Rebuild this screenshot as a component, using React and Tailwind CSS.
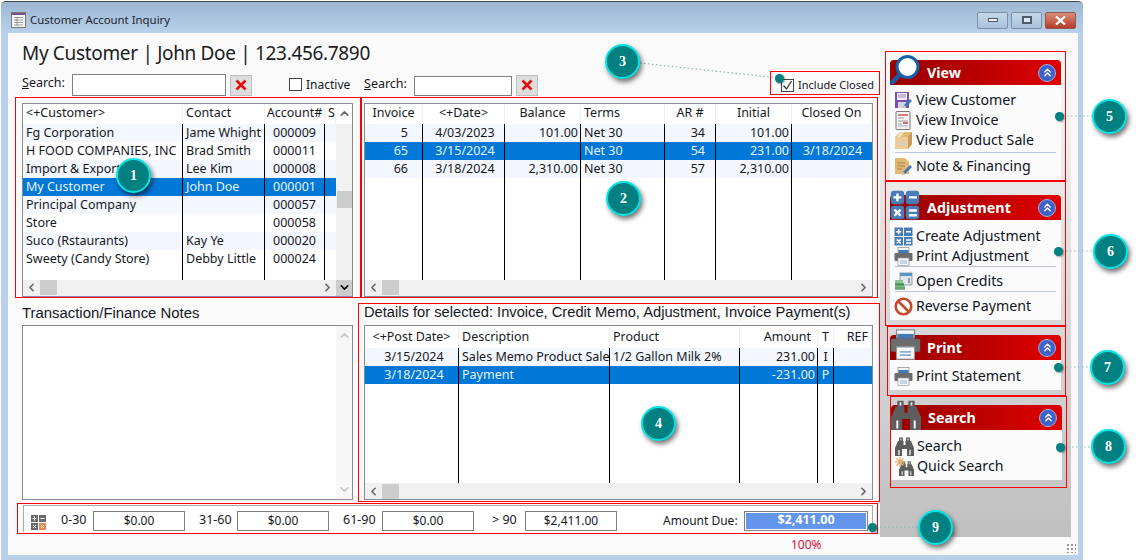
import React from "react";
import { ChevronLeft, ChevronRight, ChevronUp, ChevronDown, ChevronsUp } from "lucide-react";

const Floppy = () => (
  <svg width="19" height="19" viewBox="0 0 19 19" className="shrink-0">
    <rect x="1" y="1" width="14" height="16" fill="#7a4fa8" />
    <rect x="3" y="2" width="10" height="7" fill="#f3f0f8" />
    <path d="M4 4h8M4 6h8" stroke="#9a86b8" />
    <rect x="4" y="11" width="8" height="6" fill="#d8d0e4" />
    <path d="M9 17l1-3 6-6 2 2-6 6z" fill="#3b78b8" />
    <path d="M9 17l1-3 2 2z" fill="#f0d8a8" />
  </svg>
);
const InvoiceDoc = () => (
  <svg width="19" height="19" viewBox="0 0 19 19" className="shrink-0">
    <rect x="2" y="0.5" width="14" height="18" rx="1" fill="#f4f4f4" stroke="#777" />
    <path d="M4 4h10" stroke="#c55" strokeWidth="1.5" />
    <path d="M4 7h6M4 10h10" stroke="#999" />
    <rect x="9" y="11" width="5" height="2" fill="#d86a6a" />
    <path d="M4 13h4M4 15h10" stroke="#aaa" />
  </svg>
);
const BoxIcon = () => (
  <svg width="19" height="19" viewBox="0 0 19 19" className="shrink-0">
    <path d="M1 6l5-5h12v12l-4 5H1z" fill="#e0b878" />
    <path d="M1 6h13v12H1z" fill="#eccb94" />
    <path d="M14 6l4-5v12l-4 5z" fill="#c89a58" />
    <path d="M6 1h4L7 6H3z" fill="#f3e0b8" />
    <rect x="5" y="11" width="6" height="3" fill="#fff" />
    <path d="M6 11v3M8 11v3M10 11v3" stroke="#777" strokeWidth="0.7" />
  </svg>
);
const NoteIcon = () => (
  <svg width="19" height="19" viewBox="0 0 19 19" className="shrink-0">
    <path d="M1 1h10l4 4v12H1z" fill="#e3b874" />
    <path d="M3 6h8M3 9h8M3 12h5" stroke="#a88450" />
    <path d="M8 18l1-3 7-7 2 2-7 7z" fill="#3b78b8" />
    <path d="M8 18l1-3 2 2z" fill="#f0d8a8" />
  </svg>
);
const CalcGrid = ({ s = 19, r = 0 }) => (
  <svg width={s} height={s} viewBox="0 0 19 19" className="shrink-0">
    <g fill="#4a7db8">
      <rect x="0.5" y="0.5" width="8.5" height="8.5" rx={r} />
      <rect x="10" y="0.5" width="8.5" height="8.5" rx={r} />
      <rect x="0.5" y="10" width="8.5" height="8.5" rx={r} />
      <rect x="10" y="10" width="8.5" height="8.5" rx={r} />
    </g>
    <path d="M4.7 2.2v5M2.2 4.7h5M12 4.7h5M2.8 12.4l3.9 3.9M6.7 12.4l-3.9 3.9M12 13h5M12 16h5" stroke="#fff" strokeWidth="1.5" />
  </svg>
);
const PrinterIcon = ({ s = 19 }) => (
  <svg width={s} height={s} viewBox="0 0 19 19" className="shrink-0">
    <rect x="4" y="0.5" width="11" height="5" fill="#f2f4f8" stroke="#888" strokeWidth="0.7" />
    <rect x="4.5" y="3" width="10" height="3" fill="#4479b4" />
    <rect x="0.5" y="6" width="18" height="8" rx="1" fill="#6c6c6c" />
    <rect x="4" y="11" width="11" height="7.5" fill="#f6f8fb" stroke="#999" strokeWidth="0.7" />
    <path d="M6 14h7M6 16h7" stroke="#8fb0d4" />
  </svg>
);
const Credits = () => (
  <svg width="19" height="19" viewBox="0 0 19 19" className="shrink-0">
    <rect x="6" y="1" width="12" height="12" fill="#dfe7ee" stroke="#6a7a88" strokeWidth="0.7" />
    <rect x="6" y="1" width="12" height="3" fill="#5a94c4" />
    <path d="M15 6v5" stroke="#555" />
    <rect x="1" y="8" width="8" height="3" fill="#8cc49a" />
    <rect x="1" y="11" width="9" height="3" fill="#5fa774" />
    <rect x="1" y="14" width="10" height="4" fill="#7dbb8c" />
    <path d="M1 12.5h9M1 16h10" stroke="#3d7a52" strokeWidth="0.6" />
  </svg>
);
const BanIcon = () => (
  <svg width="19" height="19" viewBox="0 0 19 19" className="shrink-0">
    <circle cx="9.5" cy="9.5" r="7.8" fill="#fff" stroke="#c64a2e" strokeWidth="2.6" />
    <path d="M4 4l11 11" stroke="#c64a2e" strokeWidth="2.6" />
  </svg>
);
const Binoculars = ({ s = 19, w = 19 }) => (
  <svg width={w} height={s} viewBox="0 0 19 19" className="shrink-0">
    <g fill="#5d5d5d">
      <rect x="4" y="0.5" width="4" height="4" />
      <rect x="11" y="0.5" width="4" height="4" />
      <path d="M3 4h5.5v4h2V4H16l3 7v8h-7v-7H7v7H0v-8z" />
    </g>
    <path d="M4 13v5M15 13v5" stroke="#fff" strokeWidth="1.2" />
    <path d="M6 1.5v2M13 1.5v2" stroke="#fff" strokeWidth="1" />
  </svg>
);
const QuickBin = () => (
  <div className="relative w-[19px] h-[19px] shrink-0 flex items-end justify-end">
    <Binoculars s={15} w={15} />
    <svg width="10" height="10" viewBox="0 0 10 10" className="absolute left-0 top-0">
      <path d="M5 0v10M0 5h10M1.5 1.5l7 7M8.5 1.5l-7 7" stroke="#e8a860" strokeWidth="1.2" />
    </svg>
  </div>
);
const Magnifier = () => (
  <svg width="30" height="30" viewBox="0 0 30 30">
    <path d="M10.5 19L2 27.5" stroke="#1c5aa8" strokeWidth="4.5" strokeLinecap="round" />
    <circle cx="17.5" cy="12" r="10.5" fill="#fff" stroke="#1460ac" strokeWidth="3" />
  </svg>
);
const RedX = () => (
  <svg width="12" height="12" viewBox="0 0 12 12">
    <path d="M1.5 1.5l9 9M10.5 1.5l-9 9" stroke="#e01010" strokeWidth="2.6" />
  </svg>
);
const SumIcon = () => (
  <svg width="15" height="15" viewBox="0 0 15 15" className="shrink-0">
    <rect x="0" y="0" width="7" height="7" fill="#6a6a6a" />
    <rect x="8" y="0" width="7" height="7" fill="#6a6a6a" />
    <rect x="0" y="8" width="7" height="7" fill="#6a6a6a" />
    <rect x="8" y="8" width="7" height="7" fill="#e88a58" />
    <path d="M3.5 1.5v4M1.5 3.5h4M9.5 3.5h4M2 10l3 3M5 10l-3 3M10 10l3 3M13 10l-3 3" stroke="#fff" />
  </svg>
);

const alignClass = { l: "justify-start", c: "justify-center", r: "justify-end" };

function Column({ col, selected, last }) {
  return (
    <div className={`flex flex-col shrink-0 ${col.w}`}>
      <div className={`flex items-center ${col.hh} px-[3px] pb-px border-r border-[#efefef] whitespace-nowrap overflow-hidden ${alignClass[col.ha]} ${col.hp || ""}`}>
        {col.title}
      </div>
      <div className={`flex-1 flex flex-col ${last ? "" : "border-r border-black"}`}>
        {col.cells.map((c, i) => (
          <div
            key={i}
            className={`h-[18px] flex items-center shrink-0 whitespace-nowrap overflow-hidden ${alignClass[col.a]} ${col.p} ${
              i === selected ? "bg-[#0078d7] text-[#e8f2fb]" : i % 2 === 0 ? "bg-[#f4f7fd]" : "bg-white"
            }`}
          >
            {c}
          </div>
        ))}
      </div>
    </div>
  );
}

function HScroll() {
  return (
    <div className="h-[16px] bg-[#f0f0f0] flex items-center shrink-0">
      <ChevronLeft size={13} strokeWidth={3} className="text-[#666] ml-[2px] shrink-0" />
      <div className="w-[17px] h-[15px] bg-[#cdcdcd] shrink-0 ml-[2px]" />
      <div className="flex-1" />
      <ChevronRight size={13} strokeWidth={3} className="text-[#666] mr-[2px] shrink-0" />
    </div>
  );
}

function Table({ cols, selected, hClass = "" }) {
  return (
    <div className={`border border-[#868c94] bg-white flex flex-col ${hClass}`}>
      <div className="flex flex-1 min-h-0">
        {cols.map((c, i) => (
          <Column key={i} col={c} selected={selected} last={i === cols.length - 1} />
        ))}
      </div>
      <HScroll />
    </div>
  );
}

const customers = ["Fg Corporation", "H FOOD COMPANIES, INC", "Import & Export", "My Customer", "Principal Company", "Store", "Suco (Rstaurants)", "Sweety (Candy Store)"];
const contacts = ["Jame Whight", "Brad Smith", "Lee Kim", "John Doe", "", "", "Kay Ye", "Debby Little"];
const accounts = ["000009", "000011", "000008", "000001", "000057", "000058", "000020", "000024"];

const hh = "h-[20px]";
const hb = "h-[22px]";
const custCols = [
  { w: "w-[160px]", hh, title: "<+Customer>", ha: "l", a: "l", p: "pl-[3px]", cells: customers },
  { w: "w-[82px]", hh, title: "Contact", ha: "l", a: "l", p: "pl-[3px]", cells: contacts },
  { w: "w-[60px]", hh, title: "Account#", ha: "c", a: "c", p: "", cells: accounts },
  { w: "w-[11px]", hh, title: "S", ha: "l", a: "l", p: "", cells: ["", "", "", "", "", "", "", ""] },
];
const invCols = [
  { w: "w-[58px]", hh, title: "Invoice", ha: "c", a: "r", p: "pr-[14px]", cells: ["5", "65", "66"] },
  { w: "w-[82px]", hh, title: "<+Date>", ha: "c", a: "c", p: "pl-[3px]", cells: ["4/03/2023", "3/15/2024", "3/18/2024"] },
  { w: "w-[76px]", hh, title: "Balance", ha: "c", a: "r", p: "pr-[2px]", cells: ["101.00", "", "2,310.00"] },
  { w: "w-[84px]", hh, title: "Terms", ha: "l", a: "l", p: "pl-[3px]", cells: ["Net 30", "Net 30", "Net 30"] },
  { w: "w-[51px]", hh, title: "AR #", ha: "c", a: "r", p: "pr-[10px]", cells: ["34", "54", "57"] },
  { w: "w-[76px]", hh, title: "Initial", ha: "c", a: "r", p: "pr-[2px]", cells: ["101.00", "231.00", "2,310.00"] },
  { w: "w-[80px]", hh, title: "Closed On", ha: "c", a: "c", p: "pl-[1px]", cells: ["", "3/18/2024", ""] },
];
const detCols = [
  { w: "w-[94px]", hh: hb, title: "<+Post Date>", ha: "c", a: "c", p: "pl-[5px]", cells: ["3/15/2024", "3/18/2024"] },
  { w: "w-[151px]", hh: hb, title: "Description", ha: "l", a: "l", p: "pl-[3px]", cells: ["Sales Memo Product Sale", "Payment"] },
  { w: "w-[130px]", hh: hb, title: "Product", ha: "l", a: "l", p: "pl-[3px]", cells: ["1/2 Gallon Milk 2%", ""] },
  { w: "w-[78px]", hh: hb, title: "Amount", ha: "r", hp: "pr-[6px]", a: "r", p: "pr-[2px]", cells: ["231.00", "-231.00"] },
  { w: "w-[16px]", hh: hb, title: "T", ha: "c", a: "c", p: "", cells: ["I", "P"] },
  { w: "w-[38px]", hh: hb, title: "REF", ha: "r", a: "r", p: "", cells: ["", ""] },
];

function Collapse() {
  return (
    <div className="ml-auto mr-[5px] w-[18px] h-[18px] rounded-full bg-[#3f62c6] border border-[#9db0e4] flex items-center justify-center">
      <ChevronsUp size={13} strokeWidth={2.5} className="text-white" />
    </div>
  );
}

function Item({ icon, children }) {
  return (
    <div className="h-[20px] flex items-center gap-[3px] pl-[4px] text-[14.2px] text-[#10141c] whitespace-nowrap">
      {icon}
      <span>{children}</span>
    </div>
  );
}
const Divider = ({ m }) => <div className={`mx-[5px] h-px bg-[#c0c4e4] ${m}`} />;

function Panel({ frame, title, icon, body, children }) {
  return (
    <div className={`border border-[#ff0000] shrink-0 ${frame}`}>
      <div className="relative w-[171px]">
        <div className="h-[25px] rounded-t-[4px] bg-gradient-to-r from-[#960000] to-[#e00000] flex items-center pl-[37px] text-white font-bold text-[14.3px]">
          <span className="pt-px">{title}</span>
          <Collapse />
        </div>
        <div className="absolute left-0 bottom-0">{icon}</div>
      </div>
      <div className={`w-[171px] bg-[#fbfbfb] ${body}`}>{children}</div>
    </div>
  );
}

function Box({ children }) {
  return (
    <div className="w-[92px] h-[20px] border border-[#808080] bg-white flex items-center justify-center text-[12px] shrink-0">
      {children}
    </div>
  );
}

function Callout({ n, pos }) {
  return (
    <div className={`absolute w-[35px] h-[35px] rounded-full border-2 border-[#00e6e6] bg-[#008080] text-white font-bold text-[14px] flex items-center justify-center font-['Liberation_Serif',serif] shadow-[2px_3px_5px_rgba(0,0,0,0.55)] ${pos}`}>
      {n}
    </div>
  );
}

const dot = "absolute w-[9px] h-[9px] rounded-full bg-[#008080] shadow-[1px_1px_2px_rgba(0,0,0,0.4)]";

export default function App() {
  return (
    <div className="relative w-[1138px] h-[560px] bg-white overflow-hidden font-['Noto_Sans',sans-serif] text-[12.5px] text-[#16181e]">
      <div className="ml-px mt-px w-[1082px] h-[559px] flex flex-col bg-[#b9d1ea] border-t border-[#444] rounded-t-[5px]">
        {/* title bar */}
        <div className="h-[31px] shrink-0 bg-gradient-to-b from-[#9cb7d3] to-[#b9d1ea] flex items-center pl-[10px] pr-[7px] pt-[5px] rounded-t-[5px]">
          <svg width="16" height="16" viewBox="0 0 16 16" className="shrink-0">
            <rect x="0.5" y="0.5" width="14" height="15" fill="#f6f6f6" stroke="#777" />
            <rect x="1" y="1" width="13" height="2" fill="#7a4f96" />
            <path d="M3 5.5h9M3 8h9M3 10.5h9M3 13h9M6 5v9" stroke="#888" strokeWidth="0.8" />
          </svg>
          <span className="ml-[3px] text-[11.4px] text-[#1c2430]">Customer Account Inquiry</span>
          <div className="ml-auto flex gap-[3px]">
            <div className="w-[31px] h-[17px] rounded-[2px] border border-[#7d8fa4] bg-gradient-to-b from-[#c6d8ea] to-[#a9c2dc] flex items-center justify-center">
              <div className="w-[10px] h-[4px] bg-[#eef2f6] border border-[#4c5a6a]" />
            </div>
            <div className="w-[31px] h-[17px] rounded-[2px] border border-[#7d8fa4] bg-gradient-to-b from-[#c6d8ea] to-[#a9c2dc] flex items-center justify-center">
              <div className="w-[10px] h-[8px] border-2 border-[#4c5a6a] bg-[#dfe8f1]" />
            </div>
            <div className="w-[31px] h-[17px] rounded-[2px] border border-[#8a5a52] bg-gradient-to-b from-[#d98a78] to-[#b83a28] flex items-center justify-center">
              <svg width="11" height="9" viewBox="0 0 11 9"><path d="M1 0.5l9 8M10 0.5l-9 8" stroke="#fff" strokeWidth="2.2" /></svg>
            </div>
          </div>
        </div>

        {/* window body */}
        <div className="flex-1 min-h-0 pl-[7px] pr-[5px] pb-[5px] flex">
          <div className="flex-1 flex bg-[#fafafa]">
            {/* main column */}
            <div className="w-[872px] shrink-0 flex flex-col">
              <div className="h-[38px] pl-[14px] pt-[6px] text-[19px] tracking-[-0.33px] leading-[28px] text-[#1a1c22] whitespace-nowrap">
                My Customer | John Doe | 123.456.7890
              </div>
              <div className="h-[26px] flex items-start">
                <span className="ml-[14px] mt-[3px] w-[50px]"><u>S</u>earch:</span>
                <div className="mt-[3px] w-[154px] h-[22px] border border-[#808080] bg-white" />
                <div className="ml-[4px] mt-[4px] w-[22px] h-[21px] bg-[#dedede] border border-[#c0c0c0] flex items-center justify-center"><RedX /></div>
                <div className="ml-[37px] mt-[7px] w-[13px] h-[13px] border border-[#444] bg-white" />
                <span className="ml-[4px] mt-[5px] w-[43px] text-[12px]">Inactive</span>
                <span className="ml-[15px] mt-[4px] w-[50px]"><u>S</u>earch:</span>
                <div className="mt-[5px] w-[98px] h-[20px] border border-[#808080] bg-white" />
                <div className="ml-[4px] mt-[4px] w-[22px] h-[21px] bg-[#dedede] border border-[#c0c0c0] flex items-center justify-center"><RedX /></div>
                <div className="ml-auto h-[24px] w-[110px] border border-[#ff0000] flex items-end pl-[10px] pb-[1px]">
                  <div className="w-[13px] h-[13px] mb-[1px] border border-[#444] bg-white flex items-center justify-center">
                    <svg width="11" height="11" viewBox="0 0 11 11"><path d="M1.5 5.5l3 3.5 5-8" stroke="#333" strokeWidth="1.3" fill="none" /></svg>
                  </div>
                  <span className="ml-[4px] text-[11px] leading-[16px]">Include Closed</span>
                </div>
              </div>

              {/* upper grids */}
              <div className="h-[202px] flex">
                <div className="ml-[7px] w-[346px] border border-[#ff0000] pl-[6px] pt-[5px]">
                  <div className="flex w-[331px] h-[194px] border border-[#868c94] bg-white">
                    <div className="w-[313px] flex flex-col">
                      <div className="flex flex-1 min-h-0">
                        {custCols.map((c, i) => (
                          <Column key={i} col={c} selected={3} last={i === custCols.length - 1} />
                        ))}
                      </div>
                      <HScroll />
                    </div>
                    <div className="flex-1 bg-[#f0f0f0] flex flex-col items-center">
                      <div className="w-full h-[20px] bg-white flex items-center justify-center">
                        <ChevronUp size={13} strokeWidth={3} className="text-[#666]" />
                      </div>
                      <div className="mt-[67px] w-[15px] h-[17px] bg-[#cdcdcd]" />
                      <div className="mt-auto w-full h-[16px] bg-[#cdcdcd] flex items-center justify-center">
                        <ChevronDown size={13} strokeWidth={3} className="text-black" />
                      </div>
                    </div>
                  </div>
                </div>
                <div className="w-[517px] border border-[#ff0000] pl-[2px] pt-[5px]">
                  <Table cols={invCols} selected={1} hClass="w-[509px] h-[194px]" />
                </div>
              </div>

              {/* lower grids */}
              <div className="mt-[5px] h-[199px] flex">
                <div className="ml-[14px] w-[331px] flex flex-col">
                  <div className="h-[22px] pt-px font-['Liberation_Sans',sans-serif] text-[14.9px] leading-[19px]">Transaction/Finance Notes</div>
                  <div className="h-[175px] border border-[#868c94] bg-white flex justify-end">
                    <div className="w-[16px] bg-[#f7f7f7] flex flex-col items-center justify-between py-[3px]">
                      <ChevronUp size={13} strokeWidth={3} className="text-[#c8c8c8]" />
                      <ChevronDown size={13} strokeWidth={3} className="text-[#c8c8c8]" />
                    </div>
                  </div>
                </div>
                <div className="ml-[5px] w-[522px] border border-[#ff0000] pl-[5px] flex flex-col">
                  <div className="h-[21px] font-['Liberation_Sans',sans-serif] text-[14.7px] leading-[17px] whitespace-nowrap">
                    Details for selected: Invoice, Credit Memo, Adjustment, Invoice Payment(s)
                  </div>
                  <Table cols={detCols} selected={1} hClass="w-[509px] h-[175px]" />
                </div>
              </div>

              {/* aging bar */}
              <div className="mt-px ml-[9px] w-[861px] h-[31px] border border-[#ff0000] pl-[5px] pt-px">
                <div className="w-[850px] h-[27px] border-l border-r border-t border-[#a8a8a8] flex items-center bg-white pl-[7px] pt-[3px]">
                  <div className="mt-[3px]"><SumIcon /></div>
                  <span className="ml-[15px] w-[32px]">0-30</span>
                  <Box>$0.00</Box>
                  <span className="ml-[14px] w-[38px]">31-60</span>
                  <Box>$0.00</Box>
                  <span className="ml-[14px] w-[39px]">61-90</span>
                  <Box>$0.00</Box>
                  <span className="ml-[18px] w-[33px]">&gt; 90</span>
                  <Box>$2,411.00</Box>
                  <span className="ml-[46px] w-[81px] text-[12px]">Amount Due:</span>
                  <div className="w-[124px] h-[20px] border border-[#808080] p-px shrink-0">
                    <div className="h-full bg-[#6495ed] text-white font-bold text-[12.5px] flex items-center justify-center">$2,411.00</div>
                  </div>
                </div>
              </div>
              <div className="h-[21px] pl-[783px] pt-[2px] text-[12px] text-[#e0103c]">100%</div>
            </div>

            {/* sidebar */}
            <div className="mt-[8px] w-[191px] h-[496px] shrink-0 bg-gradient-to-b from-[#fafafa] via-[#dcdcdc] to-[#c0c0c0] flex flex-col">
              <Panel frame="mt-[10px] ml-[5px] w-[181px] h-[130px] pt-[8px] pl-[4px]" title="View" body="h-[95px] pt-[5px]" icon={<Magnifier />}>
                <Item icon={<Floppy />}>View Customer</Item>
                <Item icon={<InvoiceDoc />}>View Invoice</Item>
                <Item icon={<BoxIcon />}>View Product Sale</Item>
                <Divider m="mt-[2px] mb-[3px]" />
                <Item icon={<NoteIcon />}>Note &amp; Financing</Item>
              </Panel>
              <Panel frame="ml-[5px] w-[181px] h-[145px] pt-[13px] pl-[4px]" title="Adjustment" body="h-[100px] pt-[6px]" icon={<CalcGrid s={30} r={2} />}>
                <Item icon={<CalcGrid />}>Create Adjustment</Item>
                <Item icon={<PrinterIcon />}>Print Adjustment</Item>
                <Divider m="mb-[4px]" />
                <Item icon={<Credits />}>Open Credits</Item>
                <Divider m="mb-[4px]" />
                <Item icon={<BanIcon />}>Reverse Payment</Item>
              </Panel>
              <Panel frame="ml-[7px] w-[179px] h-[70px] pt-[8px] pl-[2px]" title="Print" body="h-[30px] pt-[6px]" icon={<PrinterIcon s={31} />}>
                <Item icon={<PrinterIcon />}>Print Statement</Item>
              </Panel>
              <Panel frame="ml-[10px] w-[177px] h-[92px] pt-[8px]" title="Search" body="h-[50px] pt-[6px]" icon={<Binoculars s={30} w={30} />}>
                <Item icon={<Binoculars />}>Search</Item>
                <Item icon={<QuickBin />}>Quick Search</Item>
              </Panel>
            </div>
          </div>
        </div>
      </div>

      {/* resize grip */}
      <div className="absolute left-[1066px] top-[543px] w-[10px] h-[10px] bg-[radial-gradient(#9a9a9a_1px,transparent_1.2px)] bg-[length:4px_4px]" />

      {/* annotation connectors */}
      <svg width="1138" height="560" className="absolute left-0 top-0 pointer-events-none">
        <g stroke="#93b5b5" strokeWidth="1.2" strokeDasharray="1.5 2.5" fill="none">
          <path d="M640 63L779 78" />
          <path d="M1059 116H1092" />
          <path d="M1058 251H1093" />
          <path d="M1058 367H1090" />
          <path d="M1060 447H1091" />
          <path d="M872 527H918" />
        </g>
      </svg>
      <div className={`${dot} left-[775px] top-[74px]`} />
      <div className={`${dot} left-[1055px] top-[112px]`} />
      <div className={`${dot} left-[1054px] top-[247px]`} />
      <div className={`${dot} left-[1054px] top-[363px]`} />
      <div className={`${dot} left-[1056px] top-[443px]`} />
      <div className={`${dot} left-[868px] top-[523px]`} />

      <Callout n="1" pos="left-[116px] top-[158px]" />
      <Callout n="2" pos="left-[606px] top-[181px]" />
      <Callout n="3" pos="left-[605px] top-[44px]" />
      <Callout n="4" pos="left-[641px] top-[406px]" />
      <Callout n="5" pos="left-[1092px] top-[99px]" />
      <Callout n="6" pos="left-[1093px] top-[234px]" />
      <Callout n="7" pos="left-[1090px] top-[350px]" />
      <Callout n="8" pos="left-[1091px] top-[429px]" />
      <Callout n="9" pos="left-[918px] top-[510px]" />
    </div>
  );
}
